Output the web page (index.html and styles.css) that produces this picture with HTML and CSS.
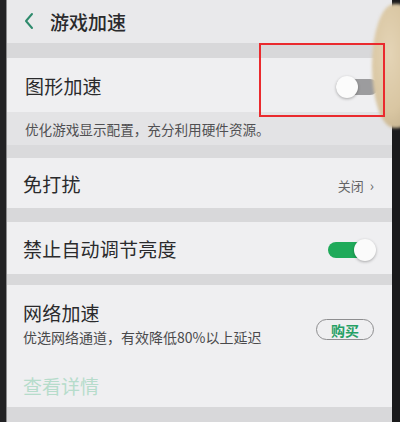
FILE: index.html
```html
<!DOCTYPE html>
<html lang="zh-CN">
<head>
<meta charset="utf-8">
<title>游戏加速</title>
<link rel="stylesheet" href="styles.css">
</head>
<body>
<div class="phone">
  <div class="screen">
    <div class="header">
      <svg class="back" width="12" height="18" viewBox="0 0 12 18"><polyline points="9,2 3,9 9,16" fill="none" stroke="#2e8a6c" stroke-width="2" stroke-linecap="round" stroke-linejoin="round"/></svg>
      <span class="title">游戏加速</span>
    </div>
    <div class="band band-top"></div>
    <div class="row row-gfx">
      <span class="label">图形加速</span>
      <span class="switch off"><span class="knob"></span></span>
    </div>
    <div class="desc">优化游戏显示配置，充分利用硬件资源。</div>
    <div class="band band-b"></div>
    <div class="row row-dnd">
      <span class="label">免打扰</span>
      <span class="value">关闭<span class="chev">›</span></span>
    </div>
    <div class="band band-c"></div>
    <div class="row row-bright">
      <span class="label">禁止自动调节亮度</span>
      <span class="switch on"><span class="knob"></span></span>
    </div>
    <div class="band band-d"></div>
    <div class="card">
      <div class="card-top">
        <div class="card-text">
          <div class="label">网络加速</div>
          <div class="sub">优选网络通道，有效降低80%以上延迟</div>
        </div>
        <span class="buy">购买</span>
      </div>
      <div class="details">查看详情</div>
    </div>
    <div class="band band-end"></div>
  </div>
  <div class="bezel-right"></div>
  <div class="finger"></div>
  <div class="highlight"></div>
</div>
</body>
</html>
```
FILE: styles.css
```css
* { box-sizing: border-box; }
html, body { margin: 0; padding: 0; }
body {
  width: 400px;
  height: 422px;
  overflow: hidden;
  background: #1c1c1e;
  font-family: "Noto Sans CJK SC", "Noto Sans", sans-serif;
}
.phone {
  position: relative;
  display: flex;
  width: 400px;
  height: 422px;
  padding-left: 6px;
  background: #222224;
}
.screen {
  width: 386px;
  height: 422px;
  display: flex;
  flex-direction: column;
  background: #ececee;
  border-left: 1px solid #8c8c8e;
}
.header {
  height: 43px;
  flex: none;
  display: flex;
  align-items: center;
  padding-left: 16px;
  background: #e9e9eb;
}
.back { margin-top: -2px; }
.title {
  margin-left: 15px;
  font-size: 19px;
  font-weight: 500;
  color: #2a2a2c;
  margin-top: -1px;
}
.band { flex: none; background: #d8d8da; }
.band-top { height: 15px; }
.band-b { height: 13px; background: #dadadc; }
.band-c { height: 14px; }
.band-d { height: 11px; }
.band-end { flex: 1; }
.row {
  flex: none;
  display: flex;
  align-items: center;
  justify-content: space-between;
  padding: 0 14px 0 16px;
  background: #efeff1;
}
.row-gfx { height: 54px; }
.row-dnd { height: 50px; }
.row-bright { height: 52px; }
.label {
  font-size: 19px;
  color: #2a2a2c;
  letter-spacing: 0.2px;
}
.row-gfx .label { margin-left: 2px; }
.desc {
  flex: none;
  height: 33px;
  display: flex;
  align-items: center;
  padding-left: 18px;
  font-size: 13.6px;
  color: #505052;
  background: #e3e3e5;
}
.value {
  font-size: 13px;
  color: #646466;
  margin-right: 4px;
  margin-top: 3px;
}
.chev { margin-left: 6px; font-size: 14px; }
.switch {
  position: relative;
  width: 44px;
  height: 16px;
  border-radius: 8px;
}
.switch .knob {
  position: absolute;
  top: -3px;
  width: 22px;
  height: 22px;
  border-radius: 50%;
  background: #fbfbfb;
  box-shadow: 0 1px 3px rgba(0,0,0,0.3);
}
.switch.off { background: #9c9c9e; margin-right: 0; margin-top: 3px; width: 42px; }
.switch.off .knob { left: 0; }
.switch.on { background: #1faa5a; margin-right: 6px; margin-top: 3px; }
.switch.on .knob { right: -4px; }
.card {
  flex: none;
  height: 122px;
  display: flex;
  flex-direction: column;
  padding: 17px 14px 0 16px;
  background: #efeff1;
}
.card-top {
  display: flex;
  align-items: center;
  justify-content: space-between;
}
.card-text .label { line-height: 22px; }
.sub {
  margin-top: 3px;
  font-size: 14px;
  color: #4a4a4c;
  line-height: 20px;
}
.buy {
  margin-top: 10px;
  margin-right: 4px;
  width: 58px;
  height: 21px;
  border: 1.5px solid #8e8e90;
  border-radius: 11px;
  display: flex;
  align-items: center;
  justify-content: center;
  font-size: 14px;
  font-weight: 700;
  color: #25a064;
}
.details {
  margin-top: 25px;
  font-size: 19px;
  color: #b6dccb;
}
.bezel-right {
  width: 8px;
  height: 422px;
  background: #1a1a1c;
}
.finger {
  position: absolute;
  left: 372px;
  top: 4px;
  width: 44px;
  height: 124px;
  border-radius: 50% 40% 40% 50%;
  background: radial-gradient(ellipse at 40% 40%, #e4d4b6 0%, #d9c6a2 55%, #b8a582 100%);
  filter: blur(1.5px);
}
.highlight {
  position: absolute;
  left: 259px;
  top: 43px;
  width: 126px;
  height: 74px;
  border: 2.5px solid #ea2a2e;
}
```
